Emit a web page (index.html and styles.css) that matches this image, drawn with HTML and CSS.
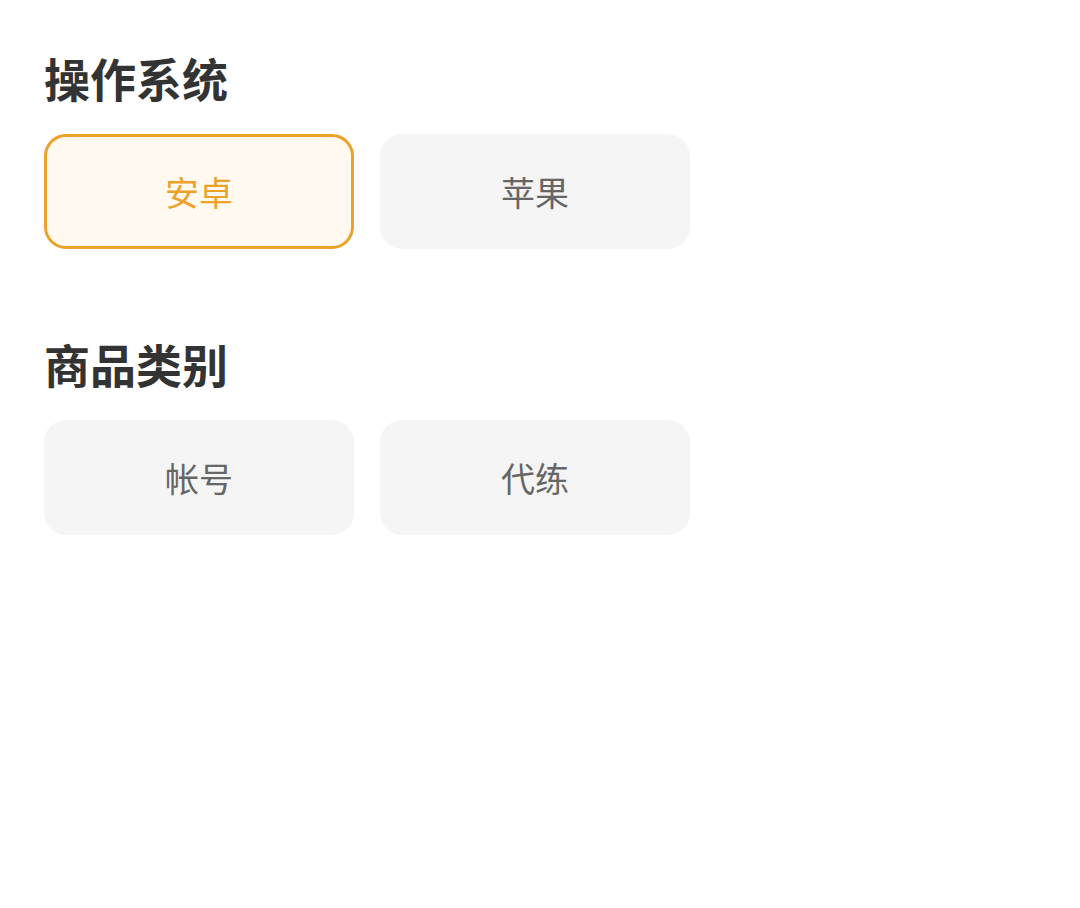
FILE: index.html
```html
<!DOCTYPE html>
<html lang="zh-CN">
<head>
  <meta charset="UTF-8" />
  <meta name="viewport" content="width=device-width, initial-scale=1.0" />
  <title>筛选</title>
  <link rel="stylesheet" href="styles.css">
</head>
<body>

  <div class="group">
    <h2 class="group-title">操作系统</h2>
    <div class="options">
      <div class="option active">安卓</div>
      <div class="option">苹果</div>
    </div>
  </div>

  <div class="group">
    <h2 class="group-title">商品类别</h2>
    <div class="options">
      <div class="option">帐号</div>
      <div class="option">代练</div>
    </div>
  </div>

</body>
</html>
```

FILE: styles.css
```css
body {
  margin: 0;
  padding: 54px 44px 0;
  background: #fff;
  font-family: "Noto Sans CJK SC", "Noto Sans", sans-serif;
}

.group {
  margin-bottom: 91px;
}

.group-title {
  margin: 0 0 34px;
  font-size: 46px;
  line-height: 46px;
  font-weight: 700;
  color: #333;
}

.options {
  display: flex;
  gap: 26px;
}

.option {
  box-sizing: border-box;
  width: 310px;
  height: 115px;
  display: flex;
  align-items: center;
  justify-content: center;
  border: 3px solid transparent;
  border-radius: 22px;
  background: #f5f5f5;
  color: #666;
  font-size: 34px;
  cursor: pointer;
}

.option.active {
  border-color: #eba22b;
  background: #fff9f0;
  color: #eba22b;
}
```
